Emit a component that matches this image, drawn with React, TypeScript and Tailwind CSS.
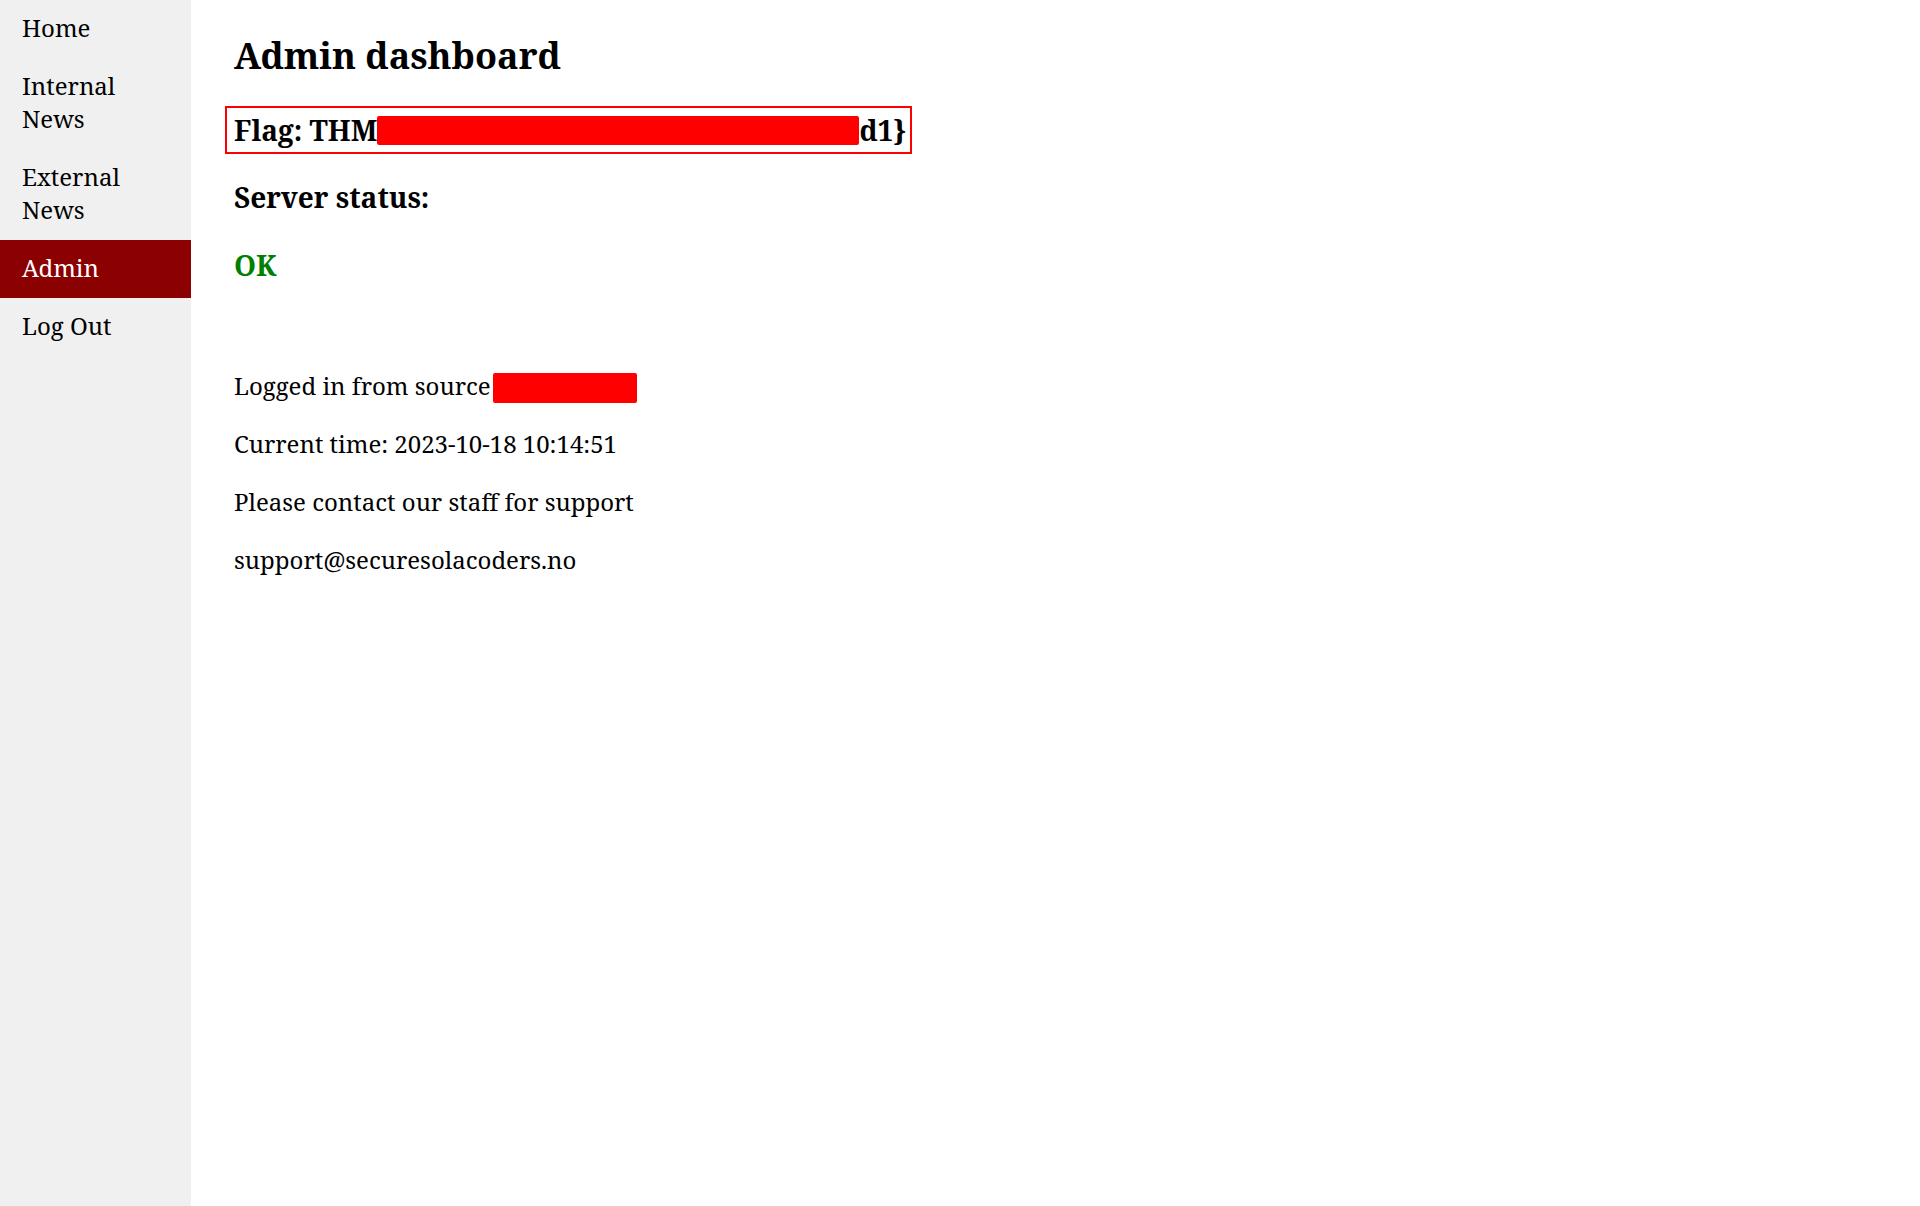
const links = ["Home", "Internal News", "External News", "Admin", "Log Out"];

export default function App() {
  return (
    <div className="flex min-h-screen bg-white font-['Noto_Serif','DejaVu_Serif',serif] text-[24px] leading-[34px] text-black">
      <nav className="w-[191px] shrink-0 bg-[#f0f0f0] leading-[33px]">
        <ul>
          {links.map((label) => (
            <li key={label}>
              <a
                href="#"
                aria-current={label === "Admin" ? "page" : undefined}
                className={
                  label === "Admin"
                    ? "block bg-[#8b0000] px-[22px] pt-[11px] pb-[14px] text-white"
                    : "block px-[22px] pt-[11px] pb-[14px]"
                }
              >
                {label}
              </a>
            </li>
          ))}
        </ul>
      </nav>
      <main className="flex min-w-0 flex-1 flex-col items-start px-[43px] pt-[31px]">
        <h1 className="text-[36px] leading-[49px] font-bold">Admin dashboard</h1>
        <h2 className="mt-[26px] -ml-[9px] flex items-center border-2 border-[#ff0000] py-[3px] pr-1 pl-[7px] text-[28px] leading-[38px] font-bold">
          <span>Flag: THM</span>
          <span className="h-[29px] w-[482px] rounded-[2px] bg-[#ff0000]" />
          <span>{"d1}"}</span>
        </h2>
        <h2 className="mt-6 text-[28px] leading-[38px] font-bold">Server status:</h2>
        <h2 className="mt-[30px] text-[28px] leading-[38px] font-bold text-[#008000]">OK</h2>
        <div className="mt-[85px] flex flex-col items-start gap-6">
          <p className="flex items-center">
            Logged in from source
            <span className="mt-1 ml-[2px] h-[30px] w-36 rounded-[2px] bg-[#ff0000]" />
          </p>
          <p>Current time: 2023-10-18 10:14:51</p>
          <p>Please contact our staff for support</p>
          <p>support@securesolacoders.no</p>
        </div>
      </main>
    </div>
  );
}
